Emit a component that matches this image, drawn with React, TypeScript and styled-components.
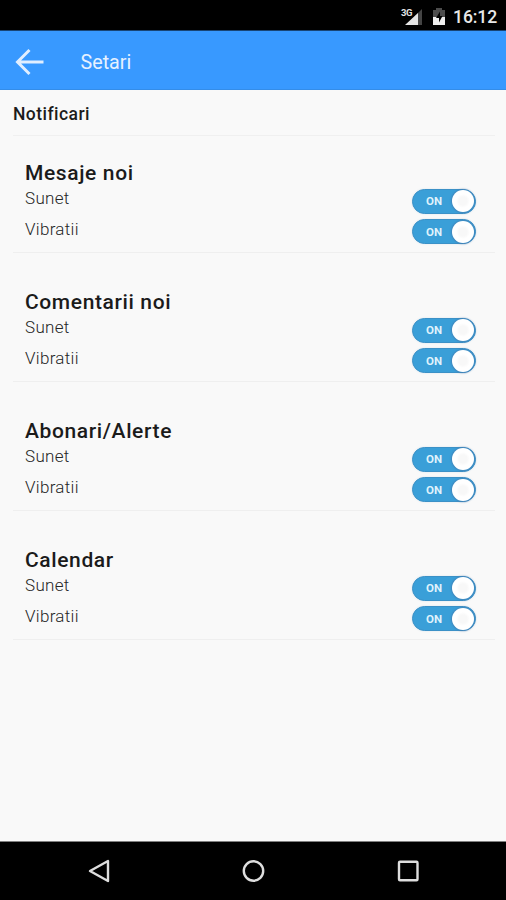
import React from 'react';
import styled, { createGlobalStyle } from 'styled-components';

const GlobalStyle = createGlobalStyle`
  * { box-sizing: border-box; }
  body { margin: 0; background: #f9f9f9; font-family: Roboto, sans-serif; }
`;

const Screen = styled.div`
  display: flex;
  flex-direction: column;
  width: 506px;
  height: 900px;
  overflow: hidden;
  background: #f9f9f9;
`;

const StatusBar = styled.header`
  display: flex;
  align-items: center;
  justify-content: flex-end;
  height: 31px;
  padding: 3px 9px 0 0;
  background: #000;
  border-bottom: 1px solid #184474;
`;

const Signal = styled.svg`
  width: 23px;
  height: 20px;
  margin-right: 9px;
`;

const Battery = styled.svg`
  width: 14px;
  height: 18px;
  margin-right: 7px;
`;

const Clock = styled.span`
  width: 44px;
  color: #e8e8e8;
  font-size: 17.6px;
  font-weight: 500;
  line-height: 20px;
  letter-spacing: -0.1px;
  white-space: nowrap;
`;

const Toolbar = styled.nav`
  display: flex;
  align-items: center;
  height: 59px;
  padding: 4px 13.5px 0;
  background: #3899ff;
  border-bottom: 1px solid #348de9;
`;

const BackButton = styled.button`
  display: flex;
  width: 31px;
  height: 30px;
  padding: 0;
  margin-right: 36px;
  border: 0;
  background: none;
`;

const ToolbarTitle = styled.h1`
  margin: 0;
  padding-top: 1px;
  color: #e6f1ff;
  font-size: 19.7px;
  font-weight: 400;
  line-height: 24px;
`;

const Content = styled.main`
  flex: 1;
  padding: 0 11px 0 13px;
`;

const SectionTitle = styled.h2`
  height: 46px;
  margin: 0;
  padding-top: 12px;
  border-bottom: 1px solid #f0f0f0;
  color: #1c1c1c;
  font-size: 17.5px;
  font-weight: 500;
  line-height: 24px;
  letter-spacing: 0.45px;
`;

const Group = styled.section`
  height: 117px;
  padding: 24px 18px 0 12px;
  border-bottom: 1px solid #efefef;

  & + & { margin-top: 12.1px; }
`;

const GroupTitle = styled.h3`
  margin: 0;
  color: #1b1b1b;
  font-size: 21px;
  font-weight: 500;
  line-height: 26px;
  letter-spacing: 0.62px;
`;

const SettingRow = styled.div`
  display: flex;
  justify-content: space-between;
  height: 30.5px;
`;

const SettingLabel = styled.span`
  color: #262626;
  font-size: 17px;
  font-weight: 300;
  line-height: 25px;
  letter-spacing: 0.3px;
`;

const Toggle = styled.button`
  display: flex;
  align-items: center;
  justify-content: space-between;
  width: 64px;
  height: 25px;
  margin: 2.5px 1px 0 0;
  padding: 0 1px 0 13px;
  border: 1px solid #3b91c7;
  border-radius: 13px;
  background: #3a9fd8;
  box-shadow: 0 0 2px #d7e3ec;
  color: #dff2fc;
  font: 700 11.5px Roboto, sans-serif;
`;

const Knob = styled.span`
  width: 22px;
  height: 22px;
  border-radius: 50%;
  background: radial-gradient(circle, #f8f8f8 0 4px, #fff 7px);
  box-shadow: 0 0 2px 0.5px #4476aa;
`;

const NavigationBar = styled.footer`
  display: flex;
  align-items: center;
  justify-content: space-between;
  height: 59px;
  padding: 0 86px 1px 87px;
  border-top: 1px solid #808080;
  background: #000;
`;

const NavIcon = styled.svg`
  width: 24px;
  height: 24px;
  fill: none;
  stroke: #dedede;
  stroke-width: 2.4;
  stroke-linejoin: round;
`;

const groups = ['Mesaje noi', 'Comentarii noi', 'Abonari/Alerte', 'Calendar'];
const options = ['Sunet', 'Vibratii'];

const NetworkLabel = styled.text`
  fill: #e2e2e2;
  font: 700 9.5px Roboto, sans-serif;
  letter-spacing: -0.4px;
`;

export default function App() {
  return (
    <Screen>
      <GlobalStyle />
      <StatusBar>
        <Signal viewBox="0 0 23 20">
          <path d="M22 2v16H6z" fill="#444" />
          <path d="M18 6v12H5z" fill="#e5e5e5" />
          <NetworkLabel x="1" y="8.6">3G</NetworkLabel>
        </Signal>
        <Battery viewBox="0 0 14 18">
          <path d="M4 0h6v2h3v7H1V2h3z" fill="#4c4c4c" />
          <path d="M1 9h12v8H1z" fill="#eee" />
          <path d="M8 3.5 4 10h3v4.5L10.5 8H8z" fill="#000" />
        </Battery>
        <Clock>16:12</Clock>
      </StatusBar>
      <Toolbar>
        <BackButton aria-label="Inapoi">
          <svg width="31" height="30" viewBox="0 0 31 30" fill="none" stroke="#e0eeff" strokeWidth="3">
            <path d="M29.5 15H4M15.5 3 3.5 15l12 12" />
          </svg>
        </BackButton>
        <ToolbarTitle>Setari</ToolbarTitle>
      </Toolbar>
      <Content>
        <SectionTitle>Notificari</SectionTitle>
        {groups.map((group) => (
          <Group key={group}>
            <GroupTitle>{group}</GroupTitle>
            {options.map((option) => (
              <SettingRow key={option}>
                <SettingLabel>{option}</SettingLabel>
                <Toggle role="switch" aria-checked="true" aria-label={option}>
                  ON
                  <Knob />
                </Toggle>
              </SettingRow>
            ))}
          </Group>
        ))}
      </Content>
      <NavigationBar>
        <NavIcon viewBox="0 0 24 24"><path d="M21 2v20L3 12z" /></NavIcon>
        <NavIcon viewBox="0 0 24 24"><circle cx="11.5" cy="12" r="9.7" /></NavIcon>
        <NavIcon viewBox="0 0 24 24"><rect x="3" y="2.8" width="18.5" height="18.5" rx="1" /></NavIcon>
      </NavigationBar>
    </Screen>
  );
}
